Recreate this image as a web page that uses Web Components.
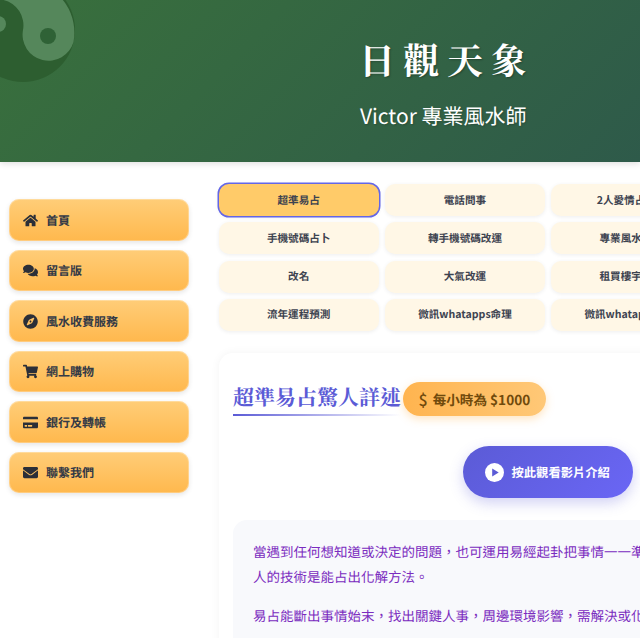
<!DOCTYPE html>
<html lang="zh-Hant">
<head>
<meta charset="utf-8">
<title>日觀天象</title>
<style>
  html,body{ margin:0; padding:0; background:#fff; overflow:hidden; height:638px; }
  body{ font-family:"Noto Sans CJK TC","Noto Sans",sans-serif; text-rendering:geometricPrecision; }
  page-body{ width:1000px; }
</style>
</head>
<body>
<site-header heading="日觀天象" subtitle="Victor 專業風水師"></site-header>
<page-body>
  <side-nav slot="side">
    <nav-item icon="home">首頁</nav-item>
    <nav-item icon="comments">留言版</nav-item>
    <nav-item icon="compass">風水收費服務</nav-item>
    <nav-item icon="cart">網上購物</nav-item>
    <nav-item icon="card">銀行及轉帳</nav-item>
    <nav-item icon="envelope">聯繫我們</nav-item>
  </side-nav>
  <tab-grid>
    <tab-btn active>超準易占</tab-btn>
    <tab-btn>電話問事</tab-btn>
    <tab-btn style="padding-right:10px">2人愛情占卜</tab-btn>
    <tab-btn>手機號碼占卜</tab-btn>
    <tab-btn>轉手機號碼改運</tab-btn>
    <tab-btn>專業風水佈局</tab-btn>
    <tab-btn>改名</tab-btn>
    <tab-btn>大氣改運</tab-btn>
    <tab-btn>租買樓宇風水</tab-btn>
    <tab-btn>流年運程預測</tab-btn>
    <tab-btn>微訊whatapps命理</tab-btn>
    <tab-btn>微訊whatapps風水</tab-btn>
  </tab-grid>
  <service-card heading="超準易占驚人詳述" price="每小時為 $1000" video="按此觀看影片介紹">
    <p>當遇到任何想知道或決定的問題，也可運用易經起卦把事情一一準確占出，而最過人的技術是能占出化解方法。</p>
    <p>易占能斷出事情始末，找出關鍵人事，周邊環境影響，需解決或化解的方法。</p>
  </service-card>
</page-body>

<script>
  const ICONS = {
    home: ['0 0 576 512', 'M280.37 148.26L96 300.11V464a16 16 0 0 0 16 16l112.06-.29a16 16 0 0 0 15.92-16V368a16 16 0 0 1 16-16h64a16 16 0 0 1 16 16v95.64a16 16 0 0 0 16 16.05L464 480a16 16 0 0 0 16-16V300L295.67 148.26a12.19 12.19 0 0 0-15.3 0zM571.6 251.47L488 182.56V44.05a12 12 0 0 0-12-12h-56a12 12 0 0 0-12 12v72.61L318.47 43a48 48 0 0 0-61 0L4.34 251.47a12 12 0 0 0-1.6 16.9l25.5 31A12 12 0 0 0 45.15 301l235.22-193.74a12.19 12.19 0 0 1 15.3 0L530.9 301a12 12 0 0 0 16.9-1.6l25.5-31a12 12 0 0 0-1.7-16.93z'],
    comments: ['0 0 576 512', 'M416 192c0-88.4-93.1-160-208-160S0 103.6 0 192c0 34.3 14.1 65.9 38 92-13.4 30.2-35.5 54.2-35.8 54.5-2.2 2.3-2.8 5.7-1.5 8.7S4.8 352 8 352c36.6 0 66.9-12.3 88.7-25 32.2 15.7 70.3 25 111.3 25 114.9 0 208-71.6 208-160zm122 220c23.9-26 38-57.7 38-92 0-66.9-53.5-124.2-129.3-148.1.9 6.6 1.3 13.3 1.3 20.1 0 105.9-107.7 192-240 192-10.8 0-21.3-.8-31.7-1.9C207.8 439.6 281.8 480 368 480c41 0 79.1-9.2 111.3-25 21.8 12.7 52.1 25 88.7 25 3.2 0 6.1-1.9 7.3-4.8 1.3-2.9.7-6.3-1.5-8.7-.3-.3-22.4-24.2-35.8-54.5z'],
    compass: ['0 0 496 512', 'M225.38 233.37c-12.5 12.5-12.5 32.76 0 45.25 12.49 12.5 32.76 12.5 45.25 0 12.5-12.5 12.5-32.76 0-45.25-12.5-12.49-32.76-12.49-45.25 0zM248 8C111.03 8 0 119.03 0 256s111.03 248 248 248 248-111.03 248-248S384.97 8 248 8zm126.14 148.05L308.17 300.4a31.938 31.938 0 0 1-15.77 15.77l-144.34 65.97c-16.65 7.61-33.81-9.55-26.2-26.2l65.98-144.35a31.938 31.938 0 0 1 15.77-15.77l144.34-65.97c16.65-7.6 33.8 9.55 26.19 26.2z'],
    cart: ['0 0 576 512', 'M528.12 301.319l47.273-208C578.806 78.301 567.391 64 551.99 64H159.208l-9.166-44.81C147.758 8.021 137.93 0 126.529 0H24C10.745 0 0 10.745 0 24v16c0 13.255 10.745 24 24 24h69.883l70.248 343.435C147.325 417.1 136 435.222 136 456c0 30.928 25.072 56 56 56s56-25.072 56-56c0-15.674-6.447-29.835-16.824-40h209.647C430.447 426.165 424 440.326 424 456c0 30.928 25.072 56 56 56s56-25.072 56-56c0-22.172-12.888-41.332-31.579-50.405l5.517-24.276c3.413-15.018-8.002-29.319-23.403-29.319H218.117l-6.545-32h293.145c11.206 0 20.92-7.754 23.403-18.681z'],
    card: ['0 0 576 512', 'M0 432c0 26.5 21.5 48 48 48h480c26.5 0 48-21.5 48-48V256H0v176zm192-68c0-6.6 5.4-12 12-12h136c6.6 0 12 5.4 12 12v40c0 6.6-5.4 12-12 12H204c-6.6 0-12-5.4-12-12v-40zm-128 0c0-6.6 5.4-12 12-12h72c6.6 0 12 5.4 12 12v40c0 6.6-5.4 12-12 12H76c-6.6 0-12-5.4-12-12v-40zM576 80v48H0V80c0-26.5 21.5-48 48-48h480c26.5 0 48 21.5 48 48z'],
    envelope: ['0 0 512 512', 'M502.3 190.8c3.9-3.1 9.7-.2 9.7 4.7V400c0 26.5-21.5 48-48 48H48c-26.5 0-48-21.5-48-48V195.6c0-5 5.7-7.8 9.7-4.7 22.4 17.4 52.1 39.5 154.1 113.6 21.1 15.4 56.7 47.8 92.2 47.6 35.7.3 72-32.8 92.3-47.6 102-74.1 131.6-96.3 154-113.7zM256 320c23.2.4 56.6-29.2 73.4-41.4 132.7-96.3 142.8-104.7 173.4-128.7 5.8-4.5 9.2-11.5 9.2-18.9v-19c0-26.5-21.5-48-48-48H48C21.5 64 0 85.5 0 112v19c0 7.4 3.4 14.3 9.2 18.9 30.6 23.9 40.7 32.4 173.4 128.7 16.8 12.2 50.2 41.8 73.4 41.4z']
  };

  class SiteHeader extends HTMLElement {
    constructor() {
      super();
      this.attachShadow({ mode: 'open' });
    }
    connectedCallback() {
      this.shadowRoot.innerHTML = `
        <style>
          :host{
            display:flex; position:relative; overflow:hidden;
            height:162px; box-sizing:border-box;
            justify-content:flex-end;
            padding-right:113px;
            background:linear-gradient(135deg,#39703c 0%,#2e5a4a 100%);
            box-shadow:0 2px 6px rgba(0,0,0,.12);
            color:#fff;
          }
          .yy{ position:absolute; left:-40px; top:-40px; width:130px; height:130px; }
          .text{ width:167px; display:flex; flex-direction:column; align-items:flex-start; }
          h1{
            margin:36px 0 0 -1px; font:700 36px/48px "Noto Serif CJK TC","Noto Serif CJK SC","Liberation Serif",serif;
            letter-spacing:8px; white-space:nowrap;
            text-shadow:1px 1px 2px rgba(0,0,0,.3);
          }
          p{
            margin:16px 0 0; font-size:21px; line-height:32px; font-weight:400; white-space:nowrap;
            text-shadow:1px 1px 2px rgba(0,0,0,.2);
          }
        </style>
        <svg class="yy" viewBox="-40 -40 130 130" aria-hidden="true">
          <circle cx="23" cy="30" r="52" fill="#2d5e30"/>
          <path d="M-27.5 17.9A52 52 0 0 1 73.5 42.1A26 26 0 0 1 23 30A26 26 0 0 0 -27.5 17.9Z" fill="#55875b"/>
          <circle cx="48" cy="36" r="8" fill="#2f6236"/>
          <circle cx="-2" cy="24" r="8" fill="#55875b"/>
        </svg>
        <div class="text">
          <h1>${this.getAttribute('heading')}</h1>
          <p>${this.getAttribute('subtitle')}</p>
        </div>
      `;
    }
  }

  class PageBody extends HTMLElement {
    constructor() {
      super();
      this.attachShadow({ mode: 'open' });
      this.shadowRoot.innerHTML = `
        <style>
          :host{ display:flex; gap:30px; padding:22.3px 0 0 8.5px; box-sizing:border-box; }
          .side{ flex:0 0 180px; padding-top:15.2px; }
          .main{ flex:1 1 auto; min-width:0; display:flex; flex-direction:column; gap:22px; }
        </style>
        <div class="side"><slot name="side"></slot></div>
        <div class="main"><slot></slot></div>
      `;
    }
  }

  class SideNav extends HTMLElement {
    constructor() {
      super();
      this.attachShadow({ mode: 'open' });
      this.shadowRoot.innerHTML = `
        <style>
          :host{ display:flex; flex-direction:column; gap:9.3px; }
        </style>
        <slot></slot>
      `;
    }
  }

  class NavItem extends HTMLElement {
    constructor() {
      super();
      this.attachShadow({ mode: 'open' });
    }
    connectedCallback() {
      const [box, d] = ICONS[this.getAttribute('icon')];
      this.shadowRoot.innerHTML = `
        <style>
          :host{
            display:flex; align-items:center; height:41.2px; box-sizing:border-box;
            padding-left:14.5px; gap:8px;
            border-radius:10px;
            background:linear-gradient(180deg,#ffcd78 0%,#ffb84d 100%);
            box-shadow:0 2px 5px rgba(0,0,0,.1), inset 0 0 0 1px rgba(255,255,255,.28);
            color:#343a46; font-size:12px; font-weight:700; cursor:pointer;
          }
          .ic{ width:15px; height:15px; flex:none; display:flex; align-items:center; justify-content:center; }
          svg{ width:15px; height:15px; fill:#2b2f38; }
        </style>
        <span class="ic"><svg viewBox="${box}" aria-hidden="true"><path d="${d}"/></svg></span>
        <slot></slot>
      `;
    }
  }

  class TabGrid extends HTMLElement {
    constructor() {
      super();
      this.attachShadow({ mode: 'open' });
      this.shadowRoot.innerHTML = `
        <style>
          :host{ display:grid; grid-template-columns:repeat(3,160.4px); gap:6.2px 5.9px; }
        </style>
        <slot></slot>
      `;
    }
  }

  class TabBtn extends HTMLElement {
    constructor() {
      super();
      this.attachShadow({ mode: 'open' });
      this.shadowRoot.innerHTML = `
        <style>
          :host{
            display:flex; align-items:center; justify-content:center;
            height:32px; box-sizing:border-box; border-radius:10px;
            background:#fff7e6; color:#3d4350;
            font-size:10.6px; font-weight:700; white-space:nowrap; overflow:hidden;
            box-shadow:0 1px 4px rgba(0,0,0,.07);
            cursor:pointer;
          }
          :host([active]){
            background:#ffcb69;
            box-shadow:0 0 0 1.5px #6366e8, 0 1px 4px rgba(0,0,0,.1);
          }
        </style>
        <slot></slot>
      `;
    }
  }

  class ServiceCard extends HTMLElement {
    constructor() {
      super();
      this.attachShadow({ mode: 'open' });
    }
    connectedCallback() {
      this.shadowRoot.innerHTML = `
        <style>
          :host{
            display:block; box-sizing:border-box; width:560px;
            padding:28px 14.5px 24px;
            border-radius:14px; background:#fff;
            box-shadow:0 0 10px rgba(0,0,0,.05);
          }
          .top{ display:flex; align-items:center; gap:1.5px; }
          h2{
            margin:0; padding:0 0 1px;
            font:700 21px/32px "Noto Serif CJK TC","Noto Serif CJK SC","Liberation Serif",serif;
            color:#5b5bd6; white-space:nowrap;
          }
          .rule{ height:2.5px; background:linear-gradient(90deg,#5b5bd6,rgba(91,91,214,0)); }
          .price{
            display:flex; align-items:center; gap:5px;
            height:34px; padding:0 16px; border-radius:17px;
            background:linear-gradient(90deg,#ffb44f,#ffc877);
            color:#704a0c; font-size:13.6px; font-weight:700; white-space:nowrap;
            box-shadow:0 3px 8px rgba(255,180,80,.35);
          }
          .price b{ font-size:16px; font-weight:500; }
          .vrow{ display:flex; margin:30px 0 0 229.5px; }
          .video{
            display:flex; align-items:center; gap:8px;
            width:170px; height:52px; box-sizing:border-box; padding-left:22px;
            border-radius:26px;
            background:linear-gradient(135deg,#5b5bd6,#6a66f5);
            color:#fff; font-size:12.3px; font-weight:700; white-space:nowrap;
            box-shadow:0 5px 14px rgba(91,91,214,.28);
          }
          .video svg{ width:19px; height:19px; flex:none; }
          .body{
            margin-top:22px; padding:19px 20px; border-radius:14px;
            background:#f8f9fc; color:#7b2cbf;
            font-size:13.5px; line-height:24.5px;
          }
          ::slotted(p){ margin:0 0 14.5px; }
        </style>
        <div class="top">
          <div>
            <h2>${this.getAttribute('heading')}</h2>
            <div class="rule"></div>
          </div>
          <div class="price"><b>$</b><span>${this.getAttribute('price')}</span></div>
        </div>
        <div class="vrow">
          <div class="video">
            <svg viewBox="0 0 18 18" aria-hidden="true"><circle cx="9" cy="9" r="9" fill="#fff"/><path d="M6.8 5.2 13 9l-6.2 3.8z" fill="#5b5bd6"/></svg>
            <span>${this.getAttribute('video')}</span>
          </div>
        </div>
        <div class="body"><slot></slot></div>
      `;
    }
  }

  customElements.define('site-header', SiteHeader);
  customElements.define('page-body', PageBody);
  customElements.define('side-nav', SideNav);
  customElements.define('nav-item', NavItem);
  customElements.define('tab-grid', TabGrid);
  customElements.define('tab-btn', TabBtn);
  customElements.define('service-card', ServiceCard);
</script>
</body>
</html>
